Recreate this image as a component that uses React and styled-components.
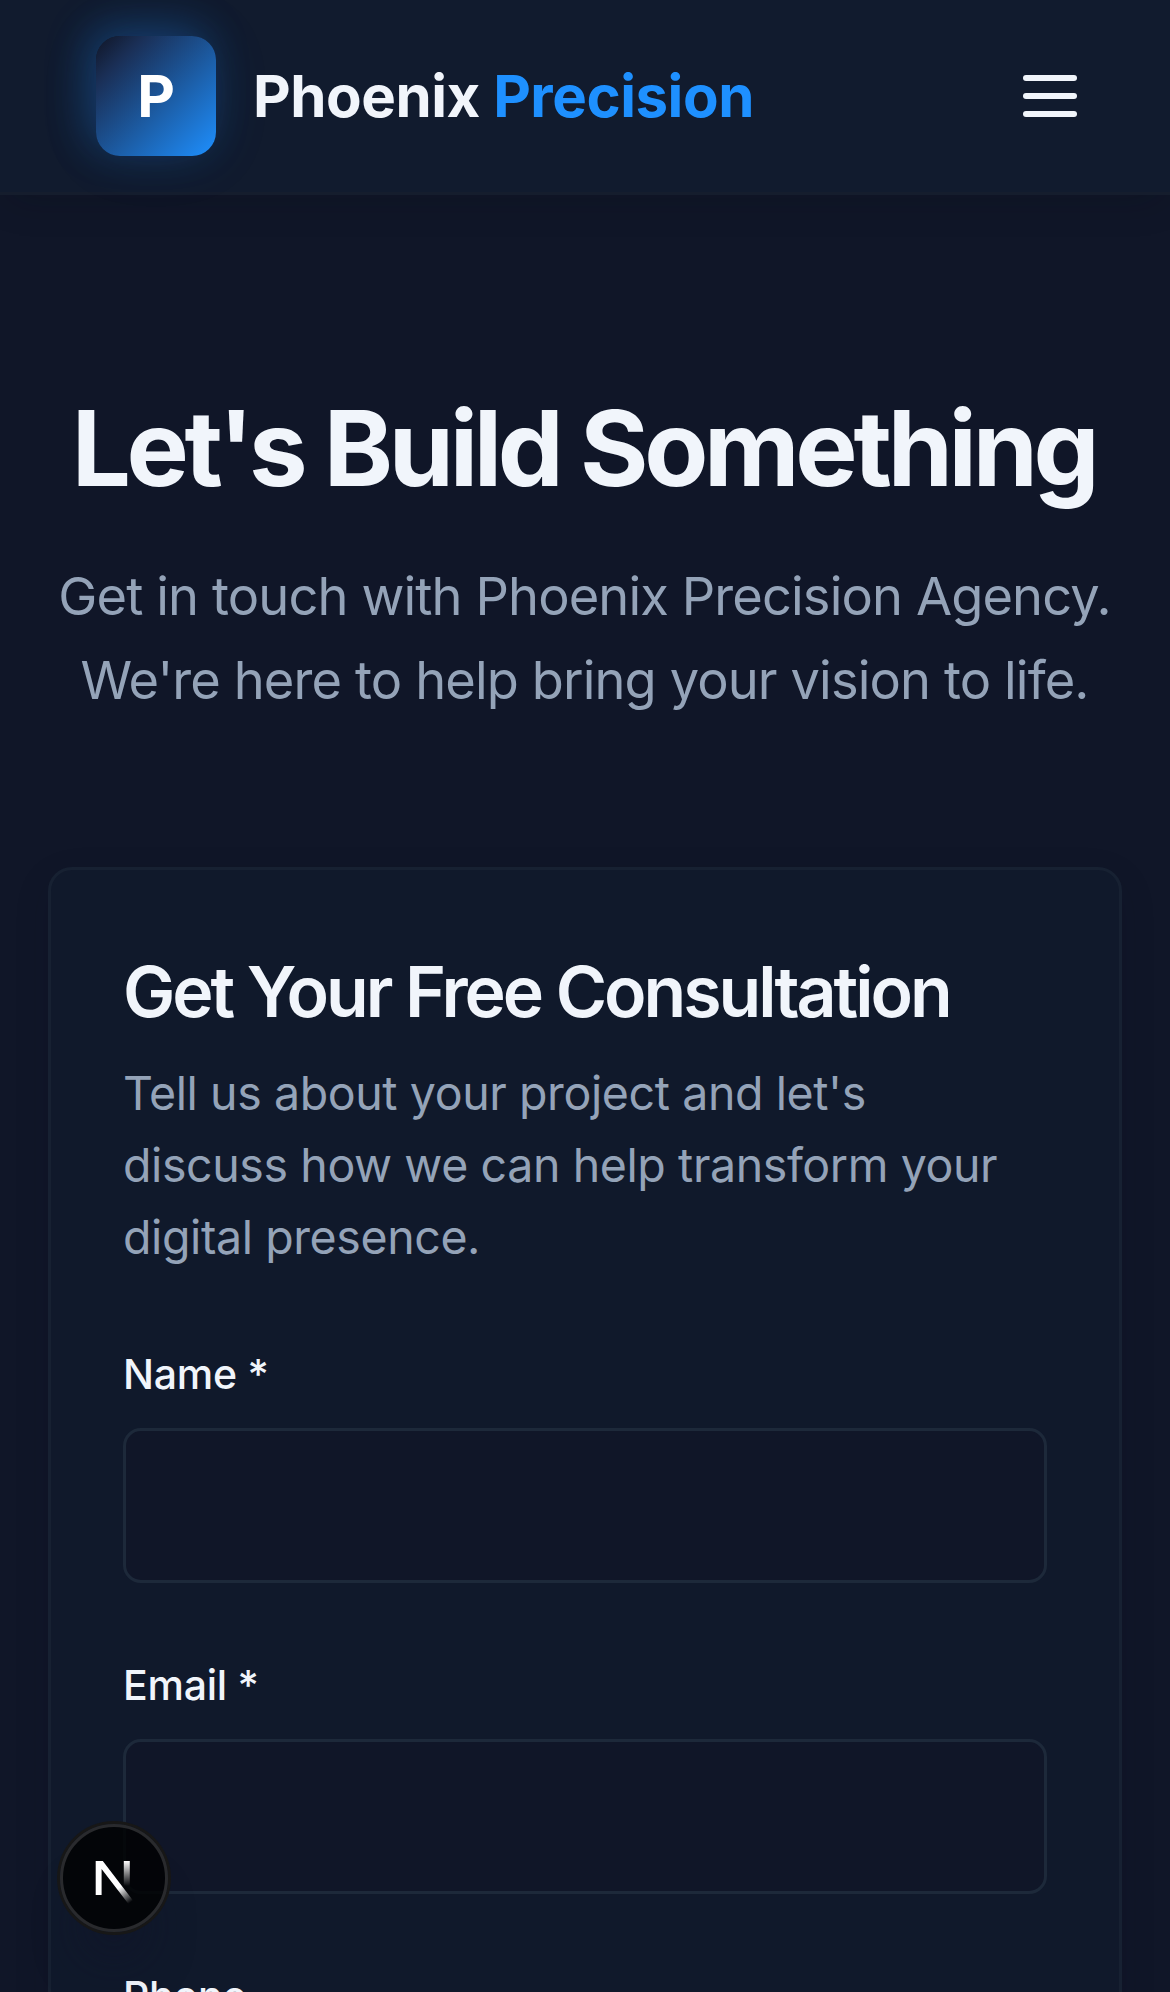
import React from 'react';
import styled, { createGlobalStyle } from 'styled-components';

const GlobalStyle = createGlobalStyle`
  *, *::before, *::after { box-sizing: border-box; }
  html, body { margin: 0; padding: 0; background: #101628; }
  body {
    font-family: Inter, "Liberation Sans", sans-serif;
    color: #f1f5fb;
    -webkit-font-smoothing: antialiased;
  }
`;

const Page = styled.div`
  height: 1992px;
  overflow: hidden;
  background: #101628;
`;

const Header = styled.header`
  position: relative;
  display: flex;
  align-items: center;
  justify-content: space-between;
  height: 195px;
  padding: 0 93px 0 96px;
  background: #111b2e;
  border-bottom: 3px solid #151d2d;
  box-shadow: 0 12px 36px -9px rgba(8, 12, 20, 0.22);
`;

const Brand = styled.div`
  display: flex;
  align-items: center;
  gap: 37px;
`;

const LogoMark = styled.div`
  display: flex;
  align-items: center;
  justify-content: center;
  width: 120px;
  height: 120px;
  border-radius: 24px;
  background: linear-gradient(135deg, #121a2f 4%, #1a2f56 20%, #1e90ff 100%);
  box-shadow:
    -9px -9px 42px rgba(30, 134, 245, 0.28),
    0 0 60px rgba(30, 134, 245, 0.1);
  color: #ffffff;
  font-size: 58.2px;
  font-weight: 700;
`;

const BrandName = styled.span`
  font-size: 58.2px;
  font-weight: 700;
  letter-spacing: -0.46px;
  white-space: nowrap;
`;

const Accent = styled.span`
  color: #1e90ff;
`;

const MenuButton = styled.button`
  display: flex;
  flex-direction: column;
  gap: 12px;
  padding: 0;
  border: 0;
  background: none;
`;

const MenuBar = styled.span`
  width: 54px;
  height: 6px;
  border-radius: 3px;
  background: #f1f5fb;
`;

const Hero = styled.section`
  padding: 190px 48px 0;
  text-align: center;
  white-space: nowrap;
`;

const HeroTitle = styled.h1`
  margin: 0;
  padding-right: 3px;
  font-size: 104.7px;
  font-weight: 700;
  line-height: 127px;
  letter-spacing: -4.3px;
`;

const HeroText = styled.p`
  margin: 42px 0 0;
  padding-right: 1px;
  color: #94a3b8;
  font-size: 52.4px;
  line-height: 84px;
  letter-spacing: -0.88px;
`;

const Card = styled.section`
  height: 1400px;
  margin: 145px 48px 0;
  padding: 72px;
  border: 3px solid #172132;
  border-radius: 24px;
  background: #10192b;
  box-shadow: 0 12px 36px rgba(10, 12, 30, 0.12);
`;

const CardTitle = styled.h2`
  margin: 0;
  font-size: 69.8px;
  font-weight: 600;
  line-height: 100px;
  letter-spacing: -3.02px;
`;

const CardText = styled.p`
  margin: 15px 0 71px;
  color: #94a3b8;
  font-size: 46.5px;
  line-height: 72px;
  letter-spacing: -0.4px;
`;

const Field = styled.label`
  display: flex;
  flex-direction: column;
  gap: 24px;
  margin-bottom: 72px;
`;

const FieldLabel = styled.span`
  font-size: 41px;
  font-weight: 500;
  line-height: 60px;
  letter-spacing: -0.25px;
`;

const Input = styled.input`
  height: 155px;
  padding: 0 48px;
  border: 3px solid #1d293a;
  border-radius: 18px;
  background: #101628;
  color: inherit;
  font: 400 46.5px Inter, sans-serif;
`;

const DevBadge = styled.div`
  position: absolute;
  left: 60px;
  top: 1824px;
  width: 108px;
  height: 108px;
  border-radius: 50%;
  border: 3px solid #292a2d;
  background: rgba(0, 0, 0, 0.8);
  box-shadow: 0 0 0 3px #171717, 0 48px 48px -24px rgba(16, 18, 40, 0.5);
  display: grid;
  place-items: center;
`;

function NextMark() {
  return (
    <svg width="102" height="102" viewBox="0 0 102 102" fill="none">
      <defs>
        <linearGradient id="diag" x1="57" y1="60" x2="68" y2="75" gradientUnits="userSpaceOnUse">
          <stop stopColor="#fff" />
          <stop offset="1" stopColor="#fff" stopOpacity="0" />
        </linearGradient>
        <linearGradient id="stem" x1="64" y1="34" x2="64" y2="59" gradientUnits="userSpaceOnUse">
          <stop stopColor="#fff" />
          <stop offset="1" stopColor="#fff" stopOpacity="0" />
        </linearGradient>
      </defs>
      <path d="M32.7 34H39.8L70 73.5L65.5 77L38.6 42V68H32.7Z" fill="url(#diag)" />
      <path d="M60.8 34H66.8V60H60.8Z" fill="url(#stem)" />
    </svg>
  );
}

export default function App() {
  return (
    <Page>
      <GlobalStyle />
      <Header>
        <Brand>
          <LogoMark>P</LogoMark>
          <BrandName>Phoenix <Accent>Precision</Accent></BrandName>
        </Brand>
        <MenuButton aria-label="Menu">
          <MenuBar />
          <MenuBar />
          <MenuBar />
        </MenuButton>
      </Header>
      <Hero>
        <HeroTitle>Let's Build Something</HeroTitle>
        <HeroText>
          Get in touch with Phoenix Precision Agency.
          <br />
          We're here to help bring your vision to life.
        </HeroText>
      </Hero>
      <Card>
        <CardTitle>Get Your Free Consultation</CardTitle>
        <CardText>
          Tell us about your project and let's
          <br />
          discuss how we can help transform your
          <br />
          digital presence.
        </CardText>
        <Field>
          <FieldLabel>Name *</FieldLabel>
          <Input />
        </Field>
        <Field>
          <FieldLabel>Email *</FieldLabel>
          <Input />
        </Field>
        <Field>
          <FieldLabel>Phone</FieldLabel>
          <Input />
        </Field>
      </Card>
      <DevBadge>
        <NextMark />
      </DevBadge>
    </Page>
  );
}
